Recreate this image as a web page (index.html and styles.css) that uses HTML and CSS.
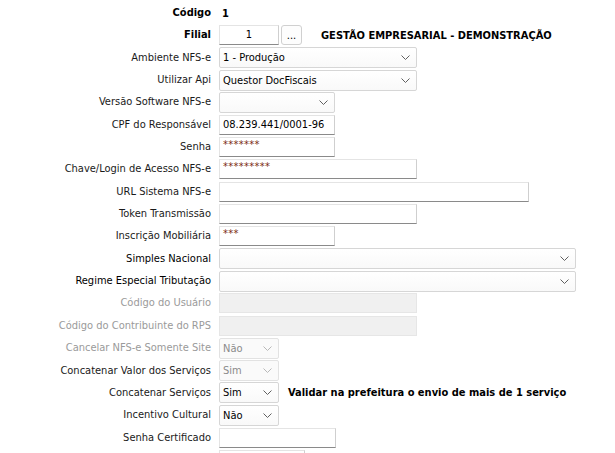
FILE: index.html
```html
<!DOCTYPE html>
<html lang="pt-BR">
<head>
<meta charset="utf-8">
<title>NFS-e</title>
<link rel="stylesheet" href="styles.css">
</head>
<body>
<div class="form">
  <div class="lbl bold">Código</div>
  <div class="fld"><span class="val bold">1</span></div>

  <div class="lbl bold">Filial</div>
  <div class="fld">
    <div class="input w60 center">1</div>
    <div class="btn">...</div>
    <span class="title bold">GESTÃO EMPRESARIAL - DEMONSTRAÇÃO</span>
  </div>

  <div class="lbl">Ambiente NFS-e</div>
  <div class="fld"><div class="select w198"><span>1 - Produção</span><svg class="chev" viewBox="0 0 9 5"><polyline points="0.5,0.5 4.5,4.5 8.5,0.5"/></svg></div></div>

  <div class="lbl">Utilizar Api</div>
  <div class="fld"><div class="select w198"><span>Questor DocFiscais</span><svg class="chev" viewBox="0 0 9 5"><polyline points="0.5,0.5 4.5,4.5 8.5,0.5"/></svg></div></div>

  <div class="lbl">Versão Software NFS-e</div>
  <div class="fld"><div class="select w116"><span></span><svg class="chev" viewBox="0 0 9 5"><polyline points="0.5,0.5 4.5,4.5 8.5,0.5"/></svg></div></div>

  <div class="lbl">CPF do Responsável</div>
  <div class="fld"><div class="input w116">08.239.441/0001-96</div></div>

  <div class="lbl">Senha</div>
  <div class="fld"><div class="input w116 pwd">*******</div></div>

  <div class="lbl">Chave/Login de Acesso NFS-e</div>
  <div class="fld"><div class="input w198 pwd">*********</div></div>

  <div class="lbl">URL Sistema NFS-e</div>
  <div class="fld"><div class="input w310"></div></div>

  <div class="lbl">Token Transmissão</div>
  <div class="fld"><div class="input w198"></div></div>

  <div class="lbl">Inscrição Mobiliária</div>
  <div class="fld"><div class="input w116 pwd">***</div></div>

  <div class="lbl dark">Simples Nacional</div>
  <div class="fld"><div class="select w357"><span></span><svg class="chev" viewBox="0 0 9 5"><polyline points="0.5,0.5 4.5,4.5 8.5,0.5"/></svg></div></div>

  <div class="lbl dark">Regime Especial Tributação</div>
  <div class="fld"><div class="select w357"><span></span><svg class="chev" viewBox="0 0 9 5"><polyline points="0.5,0.5 4.5,4.5 8.5,0.5"/></svg></div></div>

  <div class="lbl off">Código do Usuário</div>
  <div class="fld"><div class="input w198 disabled"></div></div>

  <div class="lbl off">Código do Contribuinte do RPS</div>
  <div class="fld"><div class="input w198 disabled"></div></div>

  <div class="lbl off">Cancelar NFS-e Somente Site</div>
  <div class="fld"><div class="select w60 sdis"><span>Não</span><svg class="chev" viewBox="0 0 9 5"><polyline points="0.5,0.5 4.5,4.5 8.5,0.5"/></svg></div></div>

  <div class="lbl">Concatenar Valor dos Serviços</div>
  <div class="fld"><div class="select w60 sdis"><span>Sim</span><svg class="chev" viewBox="0 0 9 5"><polyline points="0.5,0.5 4.5,4.5 8.5,0.5"/></svg></div></div>

  <div class="lbl">Concatenar Serviços</div>
  <div class="fld">
    <div class="select w60"><span>Sim</span><svg class="chev" viewBox="0 0 9 5"><polyline points="0.5,0.5 4.5,4.5 8.5,0.5"/></svg></div>
    <span class="note bold">Validar na prefeitura o envio de mais de 1 serviço</span>
  </div>

  <div class="lbl">Incentivo Cultural</div>
  <div class="fld"><div class="select w60"><span>Não</span><svg class="chev" viewBox="0 0 9 5"><polyline points="0.5,0.5 4.5,4.5 8.5,0.5"/></svg></div></div>

  <div class="lbl">Senha Certificado</div>
  <div class="fld"><div class="input w117"></div></div>

  <div class="lbl"></div>
  <div class="fld"><div class="input w86"></div></div>
</div>
</body>
</html>
```

FILE: styles.css
```css
html, body {
  margin: 0;
  padding: 0;
  background: #ffffff;
  overflow: hidden;
}
body {
  font-family: "DejaVu Sans Condensed", "DejaVu Sans", sans-serif;
  font-stretch: condensed;
  font-size: 11px;
  color: #1a1a1a;
}
.form {
  display: grid;
  grid-template-columns: 211px auto;
  grid-auto-rows: 20px;
  column-gap: 8px;
  row-gap: 2.35px;
  padding-top: 3px;
}
.lbl {
  text-align: right;
  line-height: 20px;
  white-space: nowrap;
  color: #1a1a1a;
}
.lbl.dark { color: #000; }
.lbl.off { color: #9a9a9a; }
.bold { font-weight: bold; color: #000; }
.fld {
  display: flex;
  align-items: center;
  white-space: nowrap;
}
.val { padding-left: 3px; }
.input {
  box-sizing: border-box;
  height: 20px;
  border: 1px solid #e4e4e4;
  border-right-color: #cfcfcf;
  border-bottom-color: #8a8a8a;
  background: #fff;
  padding: 0 3px;
  line-height: 18px;
  color: #000;
}
.input.center { text-align: center; }
.input.pwd { color: #7a2a12; font-size: 11px; line-height: 14px; letter-spacing: 0.3px; }
.input.disabled {
  background: #f0f0f0;
  border-color: #e6e6e6;
}
.btn {
  box-sizing: border-box;
  width: 21px;
  height: 20px;
  margin-left: 2px;
  border: 1px solid #d0d0d0;
  border-radius: 3px;
  background: #fdfdfd;
  text-align: center;
  line-height: 20px;
  color: #000;
}
.title { margin-left: 19px; }
.note { margin-left: 9px; }
.select {
  box-sizing: border-box;
  height: 21px;
  border: 1px solid #d6d6d6;
  border-radius: 2px;
  background: linear-gradient(#ffffff, #f9f9f9);
  display: flex;
  align-items: center;
  justify-content: space-between;
  padding: 0 6px 0 3px;
  color: #000;
}
.select.sdis { color: #8a8a8a; background: #fafafa; border-color: #e2e2e2; }
.chev {
  width: 9px;
  height: 5px;
  fill: none;
  stroke: #606060;
  stroke-width: 1;
}
.sdis .chev { stroke: #b8b8b8; }
.w60 { width: 60px; }
.w86 { width: 86px; }
.w116 { width: 116px; }
.w117 { width: 117px; }
.w198 { width: 198px; }
.w310 { width: 310px; }
.w357 { width: 357px; }
```
